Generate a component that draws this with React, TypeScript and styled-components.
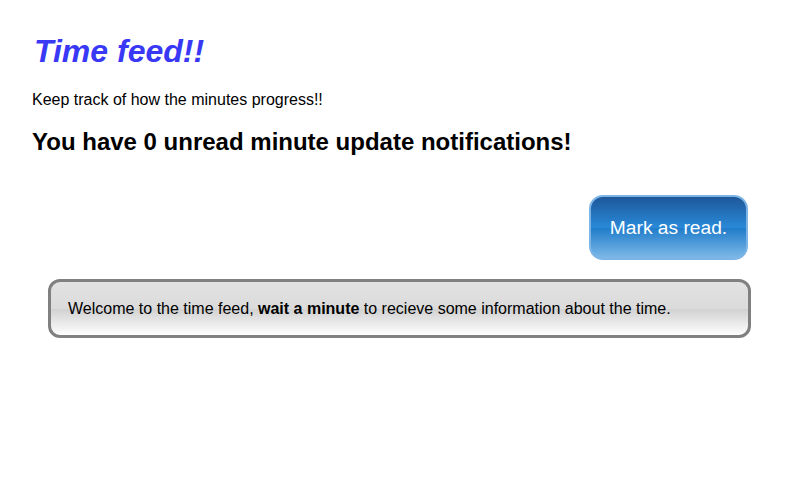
import styled, { createGlobalStyle } from 'styled-components';

const GlobalStyle = createGlobalStyle`
  body {
    margin: 0;
    background: #ffffff;
    font-family: "Liberation Sans", Arial, Helvetica, sans-serif;
    color: #000000;
  }
`;

const Page = styled.div`
  padding: 0 32px;
  display: flex;
  flex-direction: column;
`;

const Title = styled.h1`
  margin: 33px 0 0 2px;
  font-size: 32px;
  font-style: italic;
  font-weight: bold;
  color: #3939f5;
`;

const Subtitle = styled.p`
  margin: 21px 0 0;
  font-size: 16px;
`;

const Counter = styled.h2`
  margin: 19px 0 0;
  font-size: 24px;
  font-weight: bold;
`;

const Actions = styled.div`
  display: flex;
  justify-content: flex-end;
  margin-top: 39px;
  padding-right: 20px;
`;

const ReadButton = styled.button`
  width: 159px;
  height: 65px;
  border: 2px solid #7db4e6;
  border-radius: 14px;
  background: linear-gradient(#1e5799 0%, #2989d8 50%, #207cca 51%, #7db9e8 100%);
  color: #ffffff;
  font-family: "Liberation Sans", Arial, sans-serif;
  font-size: 19.2px;
  cursor: pointer;
`;

const Feed = styled.div`
  margin: 19px 17px 0 16px;
  padding: 17.5px 17px;
  border: 3px solid #808080;
  border-radius: 12px;
  background: linear-gradient(#e2e2e2 0%, #dbdbdb 50%, #d1d1d1 51%, #fefefe 100%);
  font-size: 16px;
`;

export default function App() {
  return (
    <>
      <GlobalStyle />
      <Page>
        <Title>Time feed!!</Title>
        <Subtitle>Keep track of how the minutes progress!!</Subtitle>
        <Counter>You have 0 unread minute update notifications!</Counter>
        <Actions>
          <ReadButton>Mark as read.</ReadButton>
        </Actions>
        <Feed>
          Welcome to the time feed, <b>wait a minute</b> to recieve some information about the time.
        </Feed>
      </Page>
    </>
  );
}
